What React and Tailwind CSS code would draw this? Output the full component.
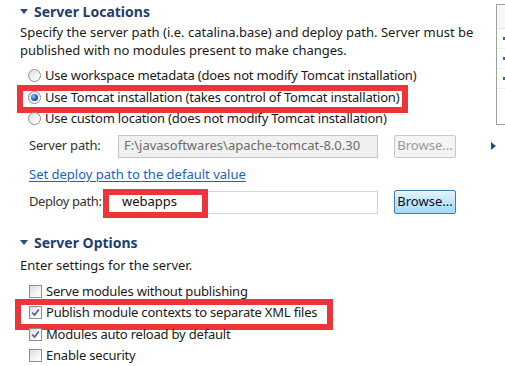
import React from 'react';

function Radio({ checked }) {
  return (
    <span className="relative inline-flex h-[13px] w-[13px] shrink-0 items-center justify-center rounded-full border border-[#8e8f8f] bg-[linear-gradient(135deg,_#dcdcdc_0%,_#ffffff_85%)]">
      {checked ? (
        <span className="h-[7px] w-[7px] rounded-full bg-[radial-gradient(circle_at_35%_35%,_#8fc6f0_0%,_#1c5fa8_55%,_#153f73_100%)]" />
      ) : null}
    </span>
  );
}

function Checkbox({ checked }) {
  return (
    <span className="inline-flex h-[13px] w-[13px] shrink-0 items-center justify-center border border-[#8e8f8f] bg-[linear-gradient(135deg,_#dedede_0%,_#ffffff_90%)]">
      {checked ? (
        <svg width="9" height="9" viewBox="0 0 9 9">
          <path d="M1.2 4.6 L3.6 7 L7.8 1.6" fill="none" stroke="#4a5fa8" strokeWidth="1.6" />
        </svg>
      ) : null}
    </span>
  );
}

function RedBox({ className }) {
  return <span className={`pointer-events-none absolute border-[6px] border-[#ec3439] ${className}`} />;
}

function SectionHeader({ children }) {
  return (
    <div className="flex h-[22px] items-center pl-[20px]">
      <svg width="8" height="5" viewBox="0 0 8 5" className="mr-[6px]">
        <path d="M0 0 L8 0 L4 5 Z" fill="#2a4a7f" />
      </svg>
      <span className="text-[14px] font-bold text-[#1e3f73]">{children}</span>
    </div>
  );
}

const radios = [
  { label: 'Use workspace metadata (does not modify Tomcat installation)', checked: false },
  { label: 'Use Tomcat installation (takes control of Tomcat installation)', checked: true, marked: true },
  { label: 'Use custom location (does not modify Tomcat installation)', checked: false },
];

const options = [
  { label: 'Serve modules without publishing', checked: false },
  { label: 'Publish module contexts to separate XML files', checked: true, marked: true },
  { label: 'Modules auto reload by default', checked: true },
  { label: 'Enable security', checked: false },
];

export default function App() {
  return (
    <div className="flex h-[366px] w-[505px] overflow-hidden bg-white font-['Noto_Sans',sans-serif] text-[13px] text-[#1a1a1a]">
      <div className="w-[496px] shrink-0">
        <SectionHeader>Server Locations</SectionHeader>
        <p className="mt-[1px] pl-[20px] leading-[18px]">
          Specify the server path (i.e. catalina.base) and deploy path. Server must be
          <br />
          published with no modules present to make changes.
        </p>

        <div className="mt-[6px] flex flex-col">
          {radios.map((item) => (
            <div key={item.label} className="relative flex h-[21.5px] items-center gap-[4px] pl-[28px]">
              {item.marked ? <RedBox className="left-[17px] top-[-2px] h-[28px] w-[391px]" /> : null}
              <Radio checked={item.checked} />
              <span className="relative tracking-[-0.2px]">{item.label}</span>
            </div>
          ))}
        </div>

        <div className="mt-[5px] flex h-[23px] items-center">
          <span className="w-[118px] shrink-0 whitespace-nowrap pl-[29px] tracking-[-0.2px] text-[#333]">Server path:</span>
          <div className="flex h-[23px] w-[260px] items-center whitespace-nowrap border border-[#c5c5c5] bg-[#f0f0f0] px-[5px] text-[#6d6d6d]">
            F:\javasoftwares\apache-tomcat-8.0.30
          </div>
          <button className="ml-[16px] h-[23px] w-[62px] rounded-[2px] border border-[#c9c9c9] bg-[#f4f4f4] text-[#9a9a9a]">
            Browse...
          </button>
          <svg width="5" height="8" viewBox="0 0 5 8" className="ml-[35px]">
            <path d="M0 0 L5 4 L0 8 Z" fill="#2a4a7f" />
          </svg>
        </div>

        <div className="mt-[8px] flex h-[18px] items-center pl-[29px]">
          <span className="text-[#1a62c4] underline underline-offset-2">Set deploy path to the default value</span>
        </div>

        <div className="mt-[7px] flex h-[23px] items-center">
          <span className="w-[103px] shrink-0 whitespace-nowrap pl-[29px] tracking-[-0.4px] text-[#333]">Deploy path:</span>
          <div className="relative flex h-[23px] w-[275px] items-center border border-[#d4d4d4] bg-white pl-[18px] text-[#111]">
            <RedBox className="left-[-1px] top-[-3px] h-[29px] w-[105px]" />
            <span className="relative">webapps</span>
          </div>
          <button className="ml-[16px] h-[24px] w-[62px] rounded-[2px] border border-[#3c7fb1] bg-[linear-gradient(180deg,_#e6f4fc_0%,_#bee6fd_50%,_#a7d9f5_100%)] text-[#111]">
            Browse...
          </button>
        </div>

        <div className="mt-[18px]">
          <SectionHeader>Server Options</SectionHeader>
        </div>
        <p className="pl-[20px] leading-[22px]">Enter settings for the server.</p>

        <div className="mt-[5px] flex flex-col">
          {options.map((item) => (
            <div key={item.label} className="relative flex h-[21.5px] items-center gap-[4px] pl-[29px]">
              {item.marked ? <RedBox className="left-[15px] top-[-3px] h-[31px] w-[318px]" /> : null}
              <Checkbox checked={item.checked} />
              <span className="relative tracking-[-0.2px]">{item.label}</span>
            </div>
          ))}
        </div>
      </div>

      <div className="mt-[4px] h-[121px] flex-1 border-l border-t border-b border-[#a0a0a0]">
        <div className="h-[24px] border-b border-[#e3e3e3] bg-[#f7f7f7]" />
        {[0, 1, 2].map((i) => (
          <div key={i} className="flex h-[20px] items-center justify-end border-b border-[#efefef]">
            <span className="h-[3px] w-[2px] bg-[#2a6ab0]" />
          </div>
        ))}
      </div>
    </div>
  );
}
